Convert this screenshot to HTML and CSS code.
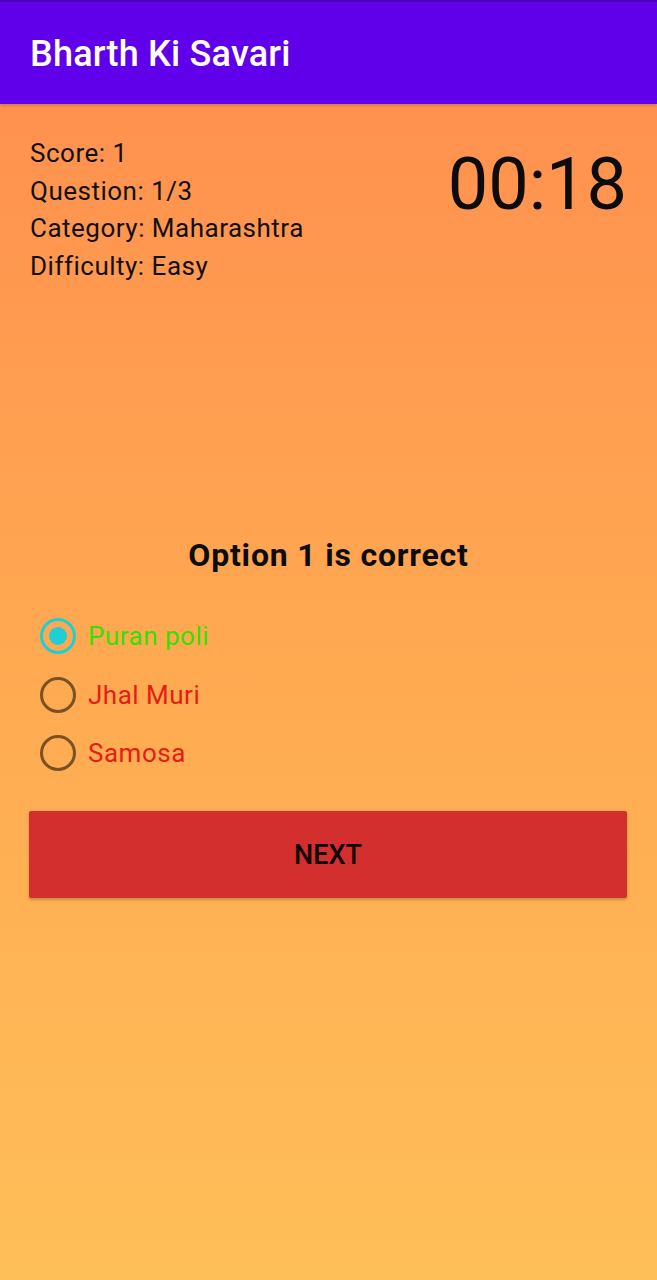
FILE: index.html
```html
<!DOCTYPE html>
<html>
<head>
<meta charset="utf-8">
<link rel="stylesheet" href="styles.css">
</head>
<body>
<div class="app">
  <header class="appbar"><h1 class="title">Bharth Ki Savari</h1></header>
  <main class="content">
    <section class="top">
      <div class="info">
        <div>Score: 1</div>
        <div>Question: 1/3</div>
        <div>Category: Maharashtra</div>
        <div>Difficulty: Easy</div>
      </div>
      <div class="timer">00:18</div>
    </section>
    <h2 class="question">Option 1 is correct</h2>
    <div class="options">
      <label class="option correct"><span class="radio checked"></span><span class="label">Puran poli</span></label>
      <label class="option wrong"><span class="radio"></span><span class="label">Jhal Muri</span></label>
      <label class="option wrong"><span class="radio"></span><span class="label">Samosa</span></label>
    </div>
    <button class="next">NEXT</button>
  </main>
</div>
</body>
</html>
```

FILE: styles.css
```css
* { box-sizing: border-box; }
html, body { margin: 0; padding: 0; }
body {
  font-family: Roboto, "Noto Sans", sans-serif;
  width: 657px;
  height: 1280px;
  overflow: hidden;
}
.app {
  display: flex;
  flex-direction: column;
  height: 1280px;
}
.appbar {
  height: 104px;
  background: #6000ea;
  border-top: 2px solid #4a00b8;
  display: flex;
  align-items: center;
  padding-left: 30px;
  box-shadow: 0 2px 3px rgba(0,0,0,0.15);
  position: relative;
  z-index: 1;
}
.title {
  margin: 0;
  color: #fff;
  font-size: 36px;
  font-weight: 500;
  letter-spacing: 0.2px;
  padding-top: 2px;
}
.content {
  flex: 1;
  background: linear-gradient(180deg, #ff914f 0%, #ffa851 45%, #ffbf58 100%);
  padding: 0 29px 0 29px;
  display: flex;
  flex-direction: column;
}
.top {
  display: flex;
  justify-content: space-between;
  padding-top: 31px;
}
.info {
  font-size: 26px;
  letter-spacing: 0.5px;
  line-height: 37.7px;
  color: #111;
  padding-left: 1px;
}
.timer {
  font-size: 72px;
  line-height: 1;
  color: #0c0c0c;
  padding-top: 14px;
  padding-right: 1px;
}
.question {
  margin: 249px 0 0 0;
  text-align: center;
  font-size: 32px;
  font-weight: 700;
  letter-spacing: 0.8px;
  color: #0c0c0c;
  line-height: 40px;
}
.options {
  display: flex;
  flex-direction: column;
  margin-top: 32px;
  padding-left: 11px;
}
.option {
  display: flex;
  align-items: center;
  height: 58.5px;
  gap: 12px;
  font-size: 26px;
  letter-spacing: 0.5px;
}
.radio {
  width: 36px;
  height: 36px;
  border-radius: 50%;
  border: 3.5px solid #7a5124;
  display: flex;
  align-items: center;
  justify-content: center;
}
.radio.checked { border-color: #1fcfd4; }
.radio.checked::after {
  content: "";
  width: 18px;
  height: 18px;
  border-radius: 50%;
  background: #1fcfd4;
}
.correct .label { color: #36e000; }
.wrong .label { color: #e41e14; }
.next {
  margin-top: 29px;
  height: 87px;
  width: 598px;
  background: #d32f2f;
  border: none;
  border-radius: 2px;
  font-family: Roboto, "Noto Sans", sans-serif;
  font-size: 27px;
  font-weight: 500;
  color: #0e0202;
  box-shadow: 0 2px 3px rgba(0,0,0,0.22);
}
```
